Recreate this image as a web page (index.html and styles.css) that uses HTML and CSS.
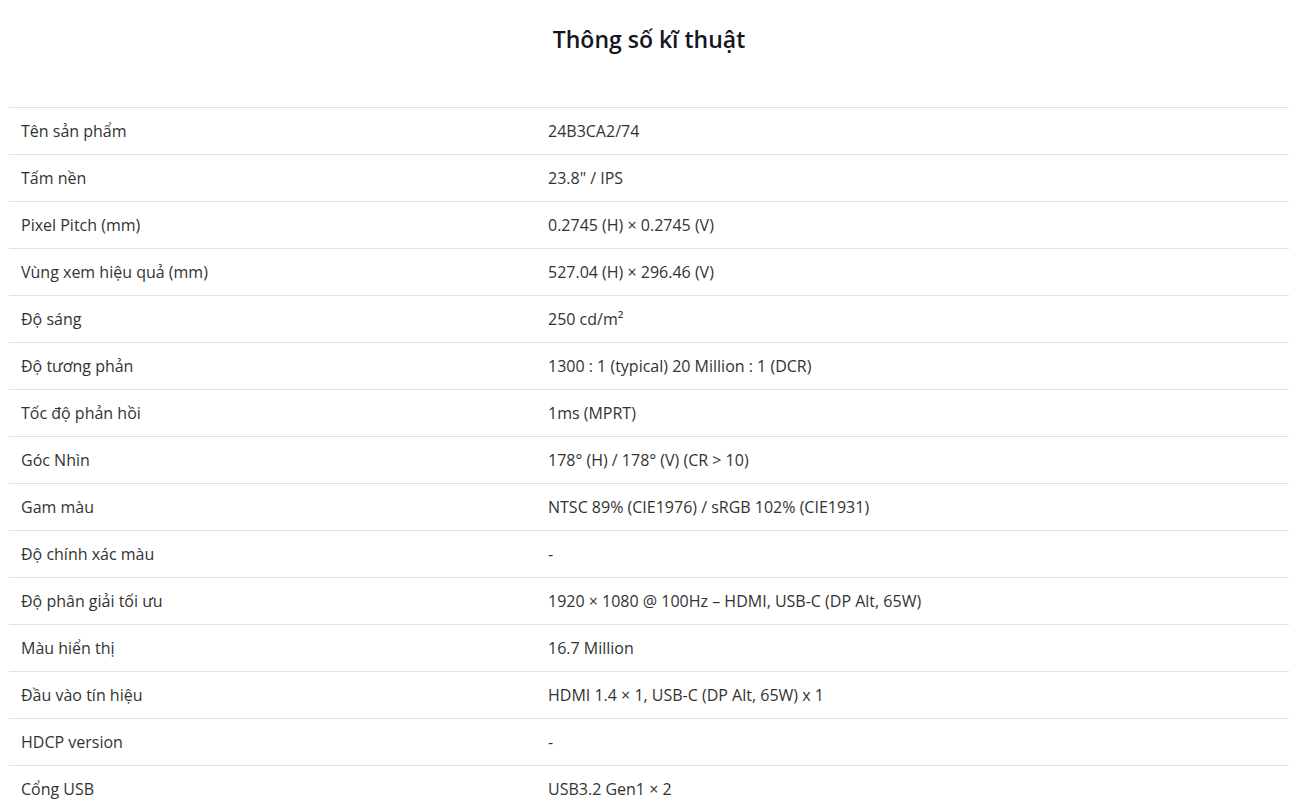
FILE: index.html
```html
<!DOCTYPE html>
<html lang="vi">
<head>
<meta charset="utf-8">
<title>Thông số kĩ thuật</title>
<link rel="stylesheet" href="styles.css">
</head>
<body>
<main class="specs">
  <h2 class="specs-title">Thông số kĩ thuật</h2>
  <div class="spec-table">
    <div class="spec-row"><div class="spec-label">Tên sản phẩm</div><div class="spec-value">24B3CA2/74</div></div>
    <div class="spec-row"><div class="spec-label">Tấm nền</div><div class="spec-value">23.8" / IPS</div></div>
    <div class="spec-row"><div class="spec-label">Pixel Pitch (mm)</div><div class="spec-value">0.2745 (H) × 0.2745 (V)</div></div>
    <div class="spec-row"><div class="spec-label">Vùng xem hiệu quả (mm)</div><div class="spec-value">527.04 (H) × 296.46 (V)</div></div>
    <div class="spec-row"><div class="spec-label">Độ sáng</div><div class="spec-value">250 cd/m²</div></div>
    <div class="spec-row"><div class="spec-label">Độ tương phản</div><div class="spec-value">1300 : 1 (typical) 20 Million : 1 (DCR)</div></div>
    <div class="spec-row"><div class="spec-label">Tốc độ phản hồi</div><div class="spec-value">1ms (MPRT)</div></div>
    <div class="spec-row"><div class="spec-label">Góc Nhìn</div><div class="spec-value">178° (H) / 178° (V) (CR &gt; 10)</div></div>
    <div class="spec-row"><div class="spec-label">Gam màu</div><div class="spec-value">NTSC 89% (CIE1976) / sRGB 102% (CIE1931)</div></div>
    <div class="spec-row"><div class="spec-label">Độ chính xác màu</div><div class="spec-value">-</div></div>
    <div class="spec-row"><div class="spec-label">Độ phân giải tối ưu</div><div class="spec-value">1920 × 1080 @ 100Hz – HDMI, USB-C (DP Alt, 65W)</div></div>
    <div class="spec-row"><div class="spec-label">Màu hiển thị</div><div class="spec-value">16.7 Million</div></div>
    <div class="spec-row"><div class="spec-label">Đầu vào tín hiệu</div><div class="spec-value">HDMI 1.4 × 1, USB-C (DP Alt, 65W) x 1</div></div>
    <div class="spec-row"><div class="spec-label">HDCP version</div><div class="spec-value">-</div></div>
    <div class="spec-row"><div class="spec-label">Cổng USB</div><div class="spec-value">USB3.2 Gen1 × 2</div></div>
  </div>
</main>
</body>
</html>
```

FILE: styles.css
```css
html, body {
  margin: 0;
  padding: 0;
  background: #fff;
}
body {
  font-family: "Open Sans", "Noto Sans", sans-serif;
  color: #333;
}
.specs {
  width: 1280px;
  margin: 0 0 0 9px;
}
.specs-title {
  margin: 23px 0 52px;
  font-size: 23px;
  line-height: 32px;
  font-weight: 600;
  text-align: center;
  color: #15151f;
}
.spec-table {
  display: flex;
  flex-direction: column;
}
.spec-row {
  display: grid;
  grid-template-columns: 527px 1fr;
  border-top: 1px solid #dee2e6;
}
.spec-label,
.spec-value {
  padding: 12px;
  font-size: 16px;
  line-height: 22px;
}
```
